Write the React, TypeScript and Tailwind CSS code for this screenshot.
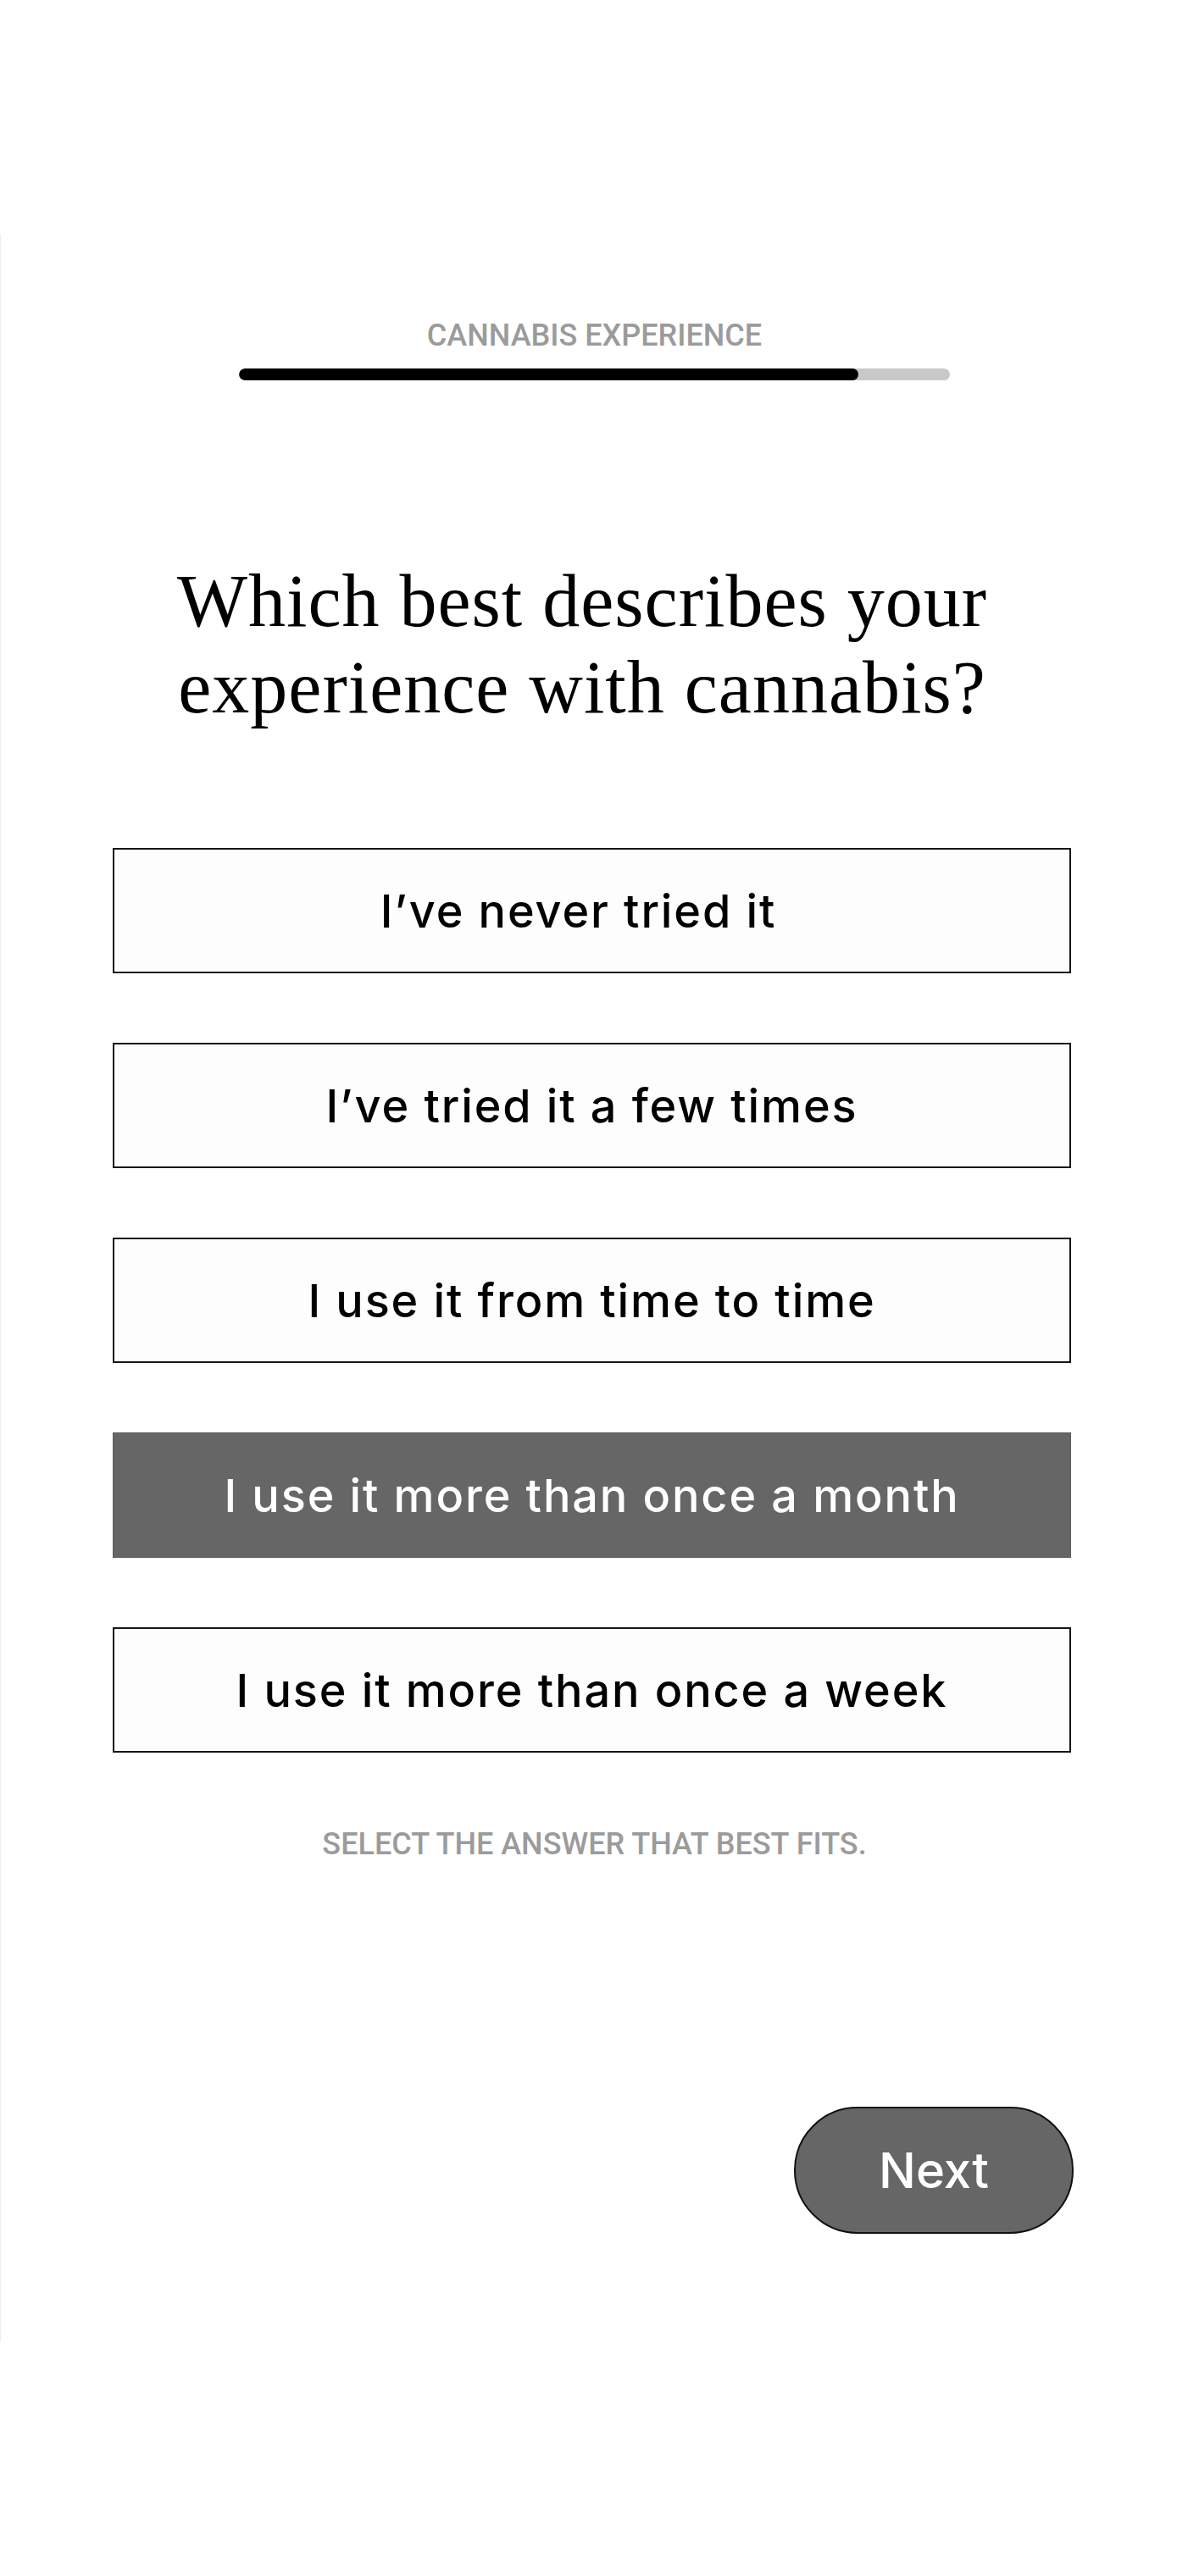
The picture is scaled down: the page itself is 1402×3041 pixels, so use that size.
import React from "react";

const options = [
  "I\u2019ve never tried it",
  "I\u2019ve tried it a few times",
  "I use it from time to time",
  "I use it more than once a month",
  "I use it more than once a week",
];

export default function App() {
  const selected = 3;
  return (
    <div className="w-[1402px] h-[3041px] bg-white overflow-hidden">
      <div className="pt-[276px]">
        <div className="h-[2489px] border-l border-[#efefef] flex flex-col">
          <div
            className="mt-[102px] w-full text-center text-[36px] leading-[36px] font-medium text-[#9b9b9b]"
            style={{ fontFamily: 'Roboto, "Liberation Sans", Arial, sans-serif' }}
          >
            CANNABIS EXPERIENCE
          </div>
          <div className="mt-[21px] ml-[281px] w-[839px] h-[14px] rounded-full bg-[#c8c8c8] overflow-hidden flex">
            <div className="w-[731px] h-full rounded-full bg-black" />
          </div>
          <h1
            className="mt-[210px] ml-[86px] w-[1200px] text-center text-[88px] leading-[102px] tracking-[1px] text-black font-normal"
            style={{ fontFamily: '"Liberation Serif", "Times New Roman", serif' }}
          >
            Which best describes your
            <br />
            experience with cannabis?
          </h1>
          <div className="mt-[138px] ml-[132px] w-[1131px] flex flex-col gap-[82px]">
            {options.map((o, i) => (
              <div
                key={o}
                className={
                  i === selected
                    ? "h-[148px] flex items-center justify-center bg-[#666666] border border-[#5a5a5a] text-white text-[54px] font-medium tracking-[0.035em]"
                    : i === 0
                    ? "h-[148px] flex items-center justify-center pr-[32px] bg-[#fdfdfd] border-2 border-[#161616] text-black text-[54px] font-medium tracking-[0.035em]"
                    : "h-[148px] flex items-center justify-center bg-[#fdfdfd] border-2 border-[#161616] text-black text-[54px] font-medium tracking-[0.035em]"
                }
                style={{ fontFamily: 'Inter, "DejaVu Sans", sans-serif' }}
              >
                {o}
              </div>
            ))}
          </div>
          <div
            className="mt-[90px] w-full text-center text-[36px] leading-[36px] font-medium text-[#9b9b9b]"
            style={{ fontFamily: 'Roboto, "Liberation Sans", Arial, sans-serif' }}
          >
            SELECT THE ANSWER THAT BEST FITS.
          </div>
          <div
            className="mt-[292px] ml-[936px] w-[330px] h-[150px] rounded-full bg-[#666666] border-2 border-[#111] flex items-center justify-center text-white text-[58px] font-medium"
            style={{ fontFamily: 'Inter, "DejaVu Sans", sans-serif' }}
          >
            Next
          </div>
        </div>
      </div>
    </div>
  );
}
